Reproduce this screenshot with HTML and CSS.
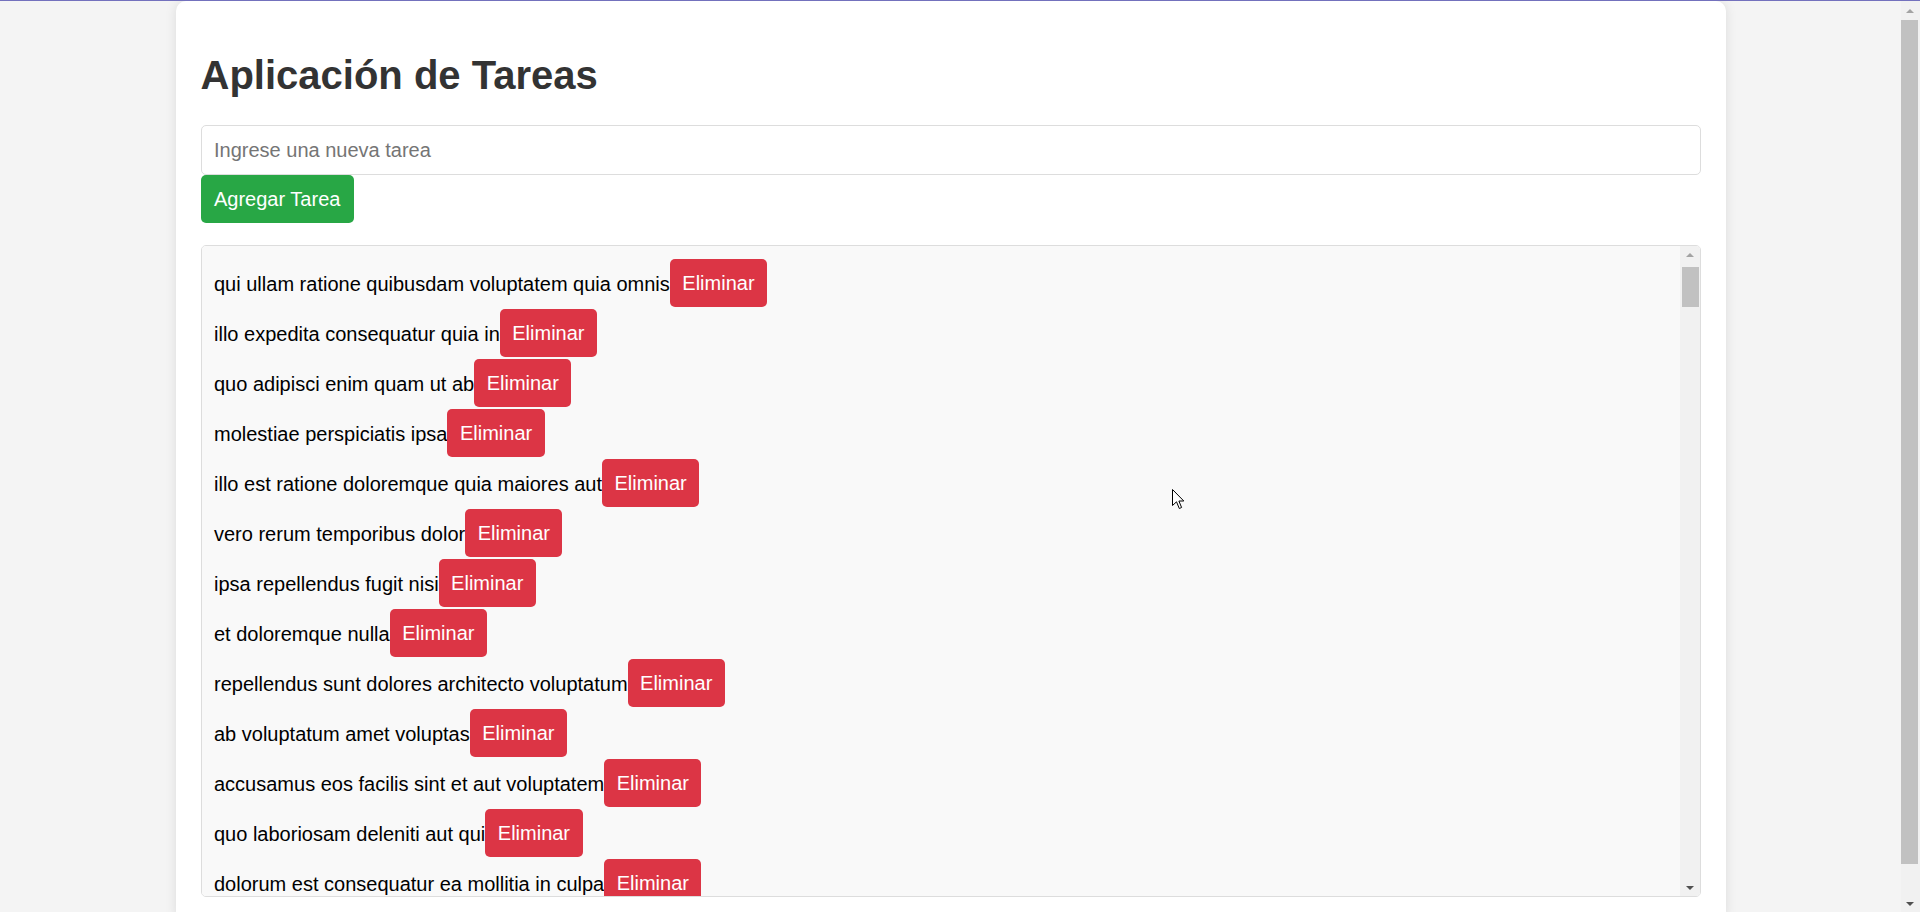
FILE: index.html
```html
<!DOCTYPE html>
<html lang="es">
<head>
<meta charset="utf-8">
<title>Aplicación de Tareas</title>
<link rel="stylesheet" href="styles.css">
</head>
<body>
<div class="container">
  <h1>Aplicación de Tareas</h1>
  <input class="task-input" type="text" placeholder="Ingrese una nueva tarea">
  <button class="btn-add">Agregar Tarea</button>
  <div class="list-wrap">
  <ul class="task-list">
    <li><span>qui ullam ratione quibusdam voluptatem quia omnis</span><button class="btn-del">Eliminar</button></li>
    <li><span>illo expedita consequatur quia in</span><button class="btn-del">Eliminar</button></li>
    <li><span>quo adipisci enim quam ut ab</span><button class="btn-del">Eliminar</button></li>
    <li><span>molestiae perspiciatis ipsa</span><button class="btn-del">Eliminar</button></li>
    <li><span>illo est ratione doloremque quia maiores aut</span><button class="btn-del">Eliminar</button></li>
    <li><span>vero rerum temporibus dolor</span><button class="btn-del">Eliminar</button></li>
    <li><span>ipsa repellendus fugit nisi</span><button class="btn-del">Eliminar</button></li>
    <li><span>et doloremque nulla</span><button class="btn-del">Eliminar</button></li>
    <li><span>repellendus sunt dolores architecto voluptatum</span><button class="btn-del">Eliminar</button></li>
    <li><span>ab voluptatum amet voluptas</span><button class="btn-del">Eliminar</button></li>
    <li><span>accusamus eos facilis sint et aut voluptatem</span><button class="btn-del">Eliminar</button></li>
    <li><span>quo laboriosam deleniti aut qui</span><button class="btn-del">Eliminar</button></li>
    <li><span>dolorum est consequatur ea mollitia in culpa</span><button class="btn-del">Eliminar</button></li>
    <li><span>molestiae ipsa aut voluptatibus pariatur dolor nihil</span><button class="btn-del">Eliminar</button></li>
    <li><span>ullam nobis libero sapiente ad optio sint</span><button class="btn-del">Eliminar</button></li>
    <li><span>suscipit repellat esse quibusdam voluptatem incidunt</span><button class="btn-del">Eliminar</button></li>
    <li><span>distinctio vitae autem nihil ut molestias quo</span><button class="btn-del">Eliminar</button></li>
    <li><span>et itaque necessitatibus maxime molestiae qui quas velit</span><button class="btn-del">Eliminar</button></li>
    <li><span>adipisci non ad dicta qui amet quaerat doloribus ea</span><button class="btn-del">Eliminar</button></li>
    <li><span>voluptas quo tenetur perspiciatis explicabo natus</span><button class="btn-del">Eliminar</button></li>
    <li><span>aliquam aut quasi</span><button class="btn-del">Eliminar</button></li>
    <li><span>veritatis pariatur delectus</span><button class="btn-del">Eliminar</button></li>
    <li><span>nesciunt totam sit blanditiis sit</span><button class="btn-del">Eliminar</button></li>
    <li><span>laborum aut in quam</span><button class="btn-del">Eliminar</button></li>
    <li><span>nemo perspiciatis repellat ut dolor libero commodi blanditiis omnis</span><button class="btn-del">Eliminar</button></li>
    <li><span>repudiandae totam in est sint facere fuga</span><button class="btn-del">Eliminar</button></li>
    <li><span>earum doloribus ea doloremque quis</span><button class="btn-del">Eliminar</button></li>
    <li><span>sint sit aut vero</span><button class="btn-del">Eliminar</button></li>
    <li><span>porro aut necessitatibus eaque distinctio</span><button class="btn-del">Eliminar</button></li>
    <li><span>repellendus veritatis molestias dicta incidunt</span><button class="btn-del">Eliminar</button></li>
    <li><span>excepturi deleniti adipisci voluptatem et neque optio illum ad</span><button class="btn-del">Eliminar</button></li>
    <li><span>sunt cum tempora</span><button class="btn-del">Eliminar</button></li>
    <li><span>totam quia non</span><button class="btn-del">Eliminar</button></li>
    <li><span>doloremque quibusdam asperiores libero corrupti illum qui omnis</span><button class="btn-del">Eliminar</button></li>
    <li><span>totam atque quo nesciunt</span><button class="btn-del">Eliminar</button></li>
    <li><span>aliquid amet impedit consequatur aspernatur placeat eaque fugiat suscipit</span><button class="btn-del">Eliminar</button></li>
    <li><span>rerum perferendis error quia ut eveniet</span><button class="btn-del">Eliminar</button></li>
    <li><span>tempore ut sint quis recusandae</span><button class="btn-del">Eliminar</button></li>
    <li><span>cum debitis quis accusamus doloremque ipsa natus sapiente omnis</span><button class="btn-del">Eliminar</button></li>
    <li><span>velit soluta adipisci molestias reiciendis harum</span><button class="btn-del">Eliminar</button></li>
    <li><span>vel voluptatem repellat nihil placeat corporis</span><button class="btn-del">Eliminar</button></li>
    <li><span>nam qui rerum fugiat accusamus</span><button class="btn-del">Eliminar</button></li>
    <li><span>sit reprehenderit omnis quia</span><button class="btn-del">Eliminar</button></li>
    <li><span>ut necessitatibus aut maiores debitis officia blanditiis velit et</span><button class="btn-del">Eliminar</button></li>
    <li><span>cupiditate necessitatibus ullam aut quis dolor voluptate</span><button class="btn-del">Eliminar</button></li>
    <li><span>distinctio exercitationem ab doloribus</span><button class="btn-del">Eliminar</button></li>
    <li><span>nesciunt dolorum quis recusandae ad pariatur ratione</span><button class="btn-del">Eliminar</button></li>
    <li><span>qui labore est occaecati recusandae aliquid quam</span><button class="btn-del">Eliminar</button></li>
    <li><span>quis et est ut voluptate quam dolor</span><button class="btn-del">Eliminar</button></li>
    <li><span>voluptatum omnis minima qui occaecati provident nulla voluptatem ratione</span><button class="btn-del">Eliminar</button></li>
    <li><span>deleniti ea temporibus enim</span><button class="btn-del">Eliminar</button></li>
    <li><span>pariatur et magnam ea doloribus similique voluptatem rerum quia</span><button class="btn-del">Eliminar</button></li>
    <li><span>est dicta totam qui explicabo doloribus qui dignissimos</span><button class="btn-del">Eliminar</button></li>
    <li><span>perspiciatis velit id laborum placeat iusto et aliquam odio</span><button class="btn-del">Eliminar</button></li>
    <li><span>et sequi qui architecto ut adipisci</span><button class="btn-del">Eliminar</button></li>
    <li><span>odit optio omnis qui sunt</span><button class="btn-del">Eliminar</button></li>
    <li><span>et placeat et tempore aspernatur sint numquam</span><button class="btn-del">Eliminar</button></li>
    <li><span>doloremque aut dolores quidem fuga qui nulla</span><button class="btn-del">Eliminar</button></li>
    <li><span>voluptas consequatur qui ut quia magnam nemo esse</span><button class="btn-del">Eliminar</button></li>
    <li><span>fugiat pariatur ratione ut asperiores necessitatibus magni</span><button class="btn-del">Eliminar</button></li>
    <li><span>rerum eum molestias autem voluptatum sit optio</span><button class="btn-del">Eliminar</button></li>
    <li><span>quia voluptatibus voluptatem quos similique maiores repellat</span><button class="btn-del">Eliminar</button></li>
    <li><span>aut id perspiciatis voluptatem iusto</span><button class="btn-del">Eliminar</button></li>
    <li><span>doloribus sint dolorum ab adipisci itaque dignissimos aliquam suscipit</span><button class="btn-del">Eliminar</button></li>
    <li><span>ut sequi accusantium et mollitia delectus sunt</span><button class="btn-del">Eliminar</button></li>
    <li><span>aut velit saepe ullam</span><button class="btn-del">Eliminar</button></li>
    <li><span>praesentium facilis facere quis harum voluptatibus voluptatem eum</span><button class="btn-del">Eliminar</button></li>
    <li><span>sint amet quia totam corporis qui exercitationem commodi</span><button class="btn-del">Eliminar</button></li>
    <li><span>expedita tempore nobis eveniet laborum maiores</span><button class="btn-del">Eliminar</button></li>
    <li><span>occaecati adipisci est possimus totam</span><button class="btn-del">Eliminar</button></li>
    <li><span>sequi dolorem sed</span><button class="btn-del">Eliminar</button></li>
    <li><span>maiores aut nesciunt delectus exercitationem vel assumenda eligendi at</span><button class="btn-del">Eliminar</button></li>
    <li><span>reiciendis est magnam amet nemo iste recusandae impedit quaerat</span><button class="btn-del">Eliminar</button></li>
    <li><span>eum ipsa maxime ut</span><button class="btn-del">Eliminar</button></li>
    <li><span>tempore molestias dolores rerum sequi voluptates ipsum consequatur</span><button class="btn-del">Eliminar</button></li>
    <li><span>suscipit qui totam</span><button class="btn-del">Eliminar</button></li>
    <li><span>voluptates eum voluptas et dicta</span><button class="btn-del">Eliminar</button></li>
    <li><span>quidem at rerum quis ex aut sit quam</span><button class="btn-del">Eliminar</button></li>
    <li><span>sunt veritatis ut voluptate</span><button class="btn-del">Eliminar</button></li>
    <li><span>et quia ad iste a</span><button class="btn-del">Eliminar</button></li>
    <li><span>incidunt ut saepe autem</span><button class="btn-del">Eliminar</button></li>
    <li><span>laudantium quae eligendi consequatur quia et vero autem</span><button class="btn-del">Eliminar</button></li>
    <li><span>vitae aut excepturi laboriosam sint aliquam et et accusantium</span><button class="btn-del">Eliminar</button></li>
    <li><span>sequi ut omnis et</span><button class="btn-del">Eliminar</button></li>
    <li><span>molestiae nisi accusantium tenetur dolorem et</span><button class="btn-del">Eliminar</button></li>
    <li><span>nulla quis consequatur saepe qui id expedita</span><button class="btn-del">Eliminar</button></li>
    <li><span>in omnis laboriosam</span><button class="btn-del">Eliminar</button></li>
    <li><span>odio iure consequatur molestiae quibusdam necessitatibus quia sint</span><button class="btn-del">Eliminar</button></li>
    <li><span>facilis modi saepe mollitia</span><button class="btn-del">Eliminar</button></li>
    <li><span>vel nihil et molestiae iusto assumenda nemo quo ut</span><button class="btn-del">Eliminar</button></li>
    <li><span>nobis suscipit ducimus enim asperiores voluptas</span><button class="btn-del">Eliminar</button></li>
    <li><span>dolorum laboriosam eos qui iure aliquam</span><button class="btn-del">Eliminar</button></li>
    <li><span>debitis accusantium ut quo facilis nihil quis sapiente necessitatibus</span><button class="btn-del">Eliminar</button></li>
    <li><span>neque voluptates ratione</span><button class="btn-del">Eliminar</button></li>
    <li><span>excepturi a et neque qui expedita vel voluptate</span><button class="btn-del">Eliminar</button></li>
    <li><span>explicabo enim cumque porro aperiam occaecati minima</span><button class="btn-del">Eliminar</button></li>
    <li><span>sed ab consequatur</span><button class="btn-del">Eliminar</button></li>
    <li><span>non sunt delectus illo nulla tenetur enim omnis</span><button class="btn-del">Eliminar</button></li>
    <li><span>excepturi non laudantium quo</span><button class="btn-del">Eliminar</button></li>
    <li><span>totam quia dolorem et illum repellat voluptas optio</span><button class="btn-del">Eliminar</button></li>
    <li><span>ad illo quis voluptatem temporibus</span><button class="btn-del">Eliminar</button></li>
    <li><span>praesentium facilis omnis laudantium fugit ad iusto nihil nesciunt</span><button class="btn-del">Eliminar</button></li>
    <li><span>a eos eaque nihil et exercitationem incidunt delectus</span><button class="btn-del">Eliminar</button></li>
    <li><span>autem temporibus harum quisquam in culpa</span><button class="btn-del">Eliminar</button></li>
    <li><span>aut aut ea corporis</span><button class="btn-del">Eliminar</button></li>
    <li><span>magni accusantium labore et id quis provident</span><button class="btn-del">Eliminar</button></li>
    <li><span>consectetur impedit quisquam qui deserunt non rerum consequuntur eius</span><button class="btn-del">Eliminar</button></li>
    <li><span>quia atque aliquam sunt impedit voluptatum rerum assumenda nisi</span><button class="btn-del">Eliminar</button></li>
    <li><span>cupiditate quos possimus corporis quisquam exercitationem</span><button class="btn-del">Eliminar</button></li>
    <li><span>sed et ea eum</span><button class="btn-del">Eliminar</button></li>
    <li><span>ipsa dolores vel facilis ut</span><button class="btn-del">Eliminar</button></li>
    <li><span>sequi quae est et qui qui eveniet asperiores</span><button class="btn-del">Eliminar</button></li>
    <li><span>quia modi consequatur vero fugiat</span><button class="btn-del">Eliminar</button></li>
    <li><span>corporis ducimus ea perspiciatis iste</span><button class="btn-del">Eliminar</button></li>
    <li><span>dolorem laboriosam vel voluptas et aliquam quasi</span><button class="btn-del">Eliminar</button></li>
    <li><span>inventore aut nihil minima laudantium hic qui omnis</span><button class="btn-del">Eliminar</button></li>
    <li><span>provident aut nobis culpa</span><button class="btn-del">Eliminar</button></li>
    <li><span>esse et quis iste est earum aut impedit</span><button class="btn-del">Eliminar</button></li>
    <li><span>qui consectetur id</span><button class="btn-del">Eliminar</button></li>
    <li><span>aut quas cumque rerum est</span><button class="btn-del">Eliminar</button></li>
    <li><span>voluptatem sit eos facilis autem adipisci</span><button class="btn-del">Eliminar</button></li>
    <li><span>quo praesentium dignissimos placeat rerum</span><button class="btn-del">Eliminar</button></li>
    <li><span>doloribus quasi exercitationem similique et</span><button class="btn-del">Eliminar</button></li>
    <li><span>explicabo consequatur debitis nostrum</span><button class="btn-del">Eliminar</button></li>
    <li><span>ipsum laudantium voluptates accusamus eius sit</span><button class="btn-del">Eliminar</button></li>
    <li><span>minima sunt minus cum dolore odit</span><button class="btn-del">Eliminar</button></li>
    <li><span>laborum animi et quam aperiam similique</span><button class="btn-del">Eliminar</button></li>
    <li><span>ex dolores error quod</span><button class="btn-del">Eliminar</button></li>
    <li><span>in quas dignissimos iusto</span><button class="btn-del">Eliminar</button></li>
    <li><span>quo consequatur quia quae sunt modi vitae</span><button class="btn-del">Eliminar</button></li>
    <li><span>ad quisquam esse</span><button class="btn-del">Eliminar</button></li>
    <li><span>sit perferendis ut fugit rem</span><button class="btn-del">Eliminar</button></li>
    <li><span>ut fugit voluptatem voluptas quo</span><button class="btn-del">Eliminar</button></li>
    <li><span>voluptate dolores a quia</span><button class="btn-del">Eliminar</button></li>
    <li><span>omnis aut non</span><button class="btn-del">Eliminar</button></li>
    <li><span>ipsam qui reprehenderit</span><button class="btn-del">Eliminar</button></li>
    <li><span>vel inventore consequuntur dolorem quam</span><button class="btn-del">Eliminar</button></li>
    <li><span>nihil voluptas doloremque dolorum ex</span><button class="btn-del">Eliminar</button></li>
    <li><span>quae quisquam eaque ullam et</span><button class="btn-del">Eliminar</button></li>
    <li><span>enim hic voluptatem ut ea</span><button class="btn-del">Eliminar</button></li>
    <li><span>qui rem labore ex</span><button class="btn-del">Eliminar</button></li>
    <li><span>sapiente voluptatem iure et</span><button class="btn-del">Eliminar</button></li>
    <li><span>quo culpa qui rerum</span><button class="btn-del">Eliminar</button></li>
    <li><span>et voluptatem eius aut sed sequi</span><button class="btn-del">Eliminar</button></li>
    <li><span>mollitia expedita ut quas iste</span><button class="btn-del">Eliminar</button></li>
    <li><span>numquam reiciendis laboriosam dolor</span><button class="btn-del">Eliminar</button></li>
    <li><span>voluptas eum rem rerum ut</span><button class="btn-del">Eliminar</button></li>
    <li><span>aspernatur labore autem et quia</span><button class="btn-del">Eliminar</button></li>
    <li><span>porro et tempora ipsam cumque</span><button class="btn-del">Eliminar</button></li>
    <li><span>molestias quasi eos rem</span><button class="btn-del">Eliminar</button></li>
    <li><span>fugit ex sint esse et perspiciatis</span><button class="btn-del">Eliminar</button></li>
    <li><span>eius omnis aut rerum</span><button class="btn-del">Eliminar</button></li>
    <li><span>natus ut nobis dolores</span><button class="btn-del">Eliminar</button></li>
    <li><span>ea sunt hic in veniam</span><button class="btn-del">Eliminar</button></li>
    <li><span>placeat quia saepe ab assumenda</span><button class="btn-del">Eliminar</button></li>
    <li><span>dolorem quia aliquid odio</span><button class="btn-del">Eliminar</button></li>
    <li><span>et est voluptas perferendis</span><button class="btn-del">Eliminar</button></li>
    <li><span>magnam ut reiciendis dolore</span><button class="btn-del">Eliminar</button></li>
    <li><span>libero sunt aut quod</span><button class="btn-del">Eliminar</button></li>
    <li><span>dicta ut harum quae</span><button class="btn-del">Eliminar</button></li>
    <li><span>sequi quia laudantium voluptas</span><button class="btn-del">Eliminar</button></li>
    <li><span>nam ut est fugiat</span><button class="btn-del">Eliminar</button></li>
    <li><span>omnis iure vitae quos</span><button class="btn-del">Eliminar</button></li>
    <li><span>rem est non quibusdam</span><button class="btn-del">Eliminar</button></li>
    <li><span>velit autem aut qui</span><button class="btn-del">Eliminar</button></li>
    <li><span>similique corrupti ut ea</span><button class="btn-del">Eliminar</button></li>
    <li><span>cum quasi aliquam odit</span><button class="btn-del">Eliminar</button></li>
    <li><span>beatae voluptas et aut</span><button class="btn-del">Eliminar</button></li>
    <li><span>id saepe earum qui</span><button class="btn-del">Eliminar</button></li>
    <li><span>iste dolores minima sit</span><button class="btn-del">Eliminar</button></li>
    <li><span>voluptatem qui sed ipsam</span><button class="btn-del">Eliminar</button></li>
    <li><span>occaecati iure est dolor</span><button class="btn-del">Eliminar</button></li>
    <li><span>quaerat in ipsum quia</span><button class="btn-del">Eliminar</button></li>
    <li><span>aut animi labore sit</span><button class="btn-del">Eliminar</button></li>
    <li><span>ratione est nesciunt hic</span><button class="btn-del">Eliminar</button></li>
    <li><span>eos nam ut harum</span><button class="btn-del">Eliminar</button></li>
    <li><span>repellat fugit vitae odio</span><button class="btn-del">Eliminar</button></li>
    <li><span>ullam officiis nisi sint</span><button class="btn-del">Eliminar</button></li>
    <li><span>corrupti tenetur enim cum</span><button class="btn-del">Eliminar</button></li>
    <li><span>fuga non iusto ad</span><button class="btn-del">Eliminar</button></li>
    <li><span>asperiores quis aut eius</span><button class="btn-del">Eliminar</button></li>
    <li><span>harum et nisi dolor</span><button class="btn-del">Eliminar</button></li>
    <li><span>qui sint odio nobis</span><button class="btn-del">Eliminar</button></li>
    <li><span>modi ut architecto est</span><button class="btn-del">Eliminar</button></li>
    <li><span>cumque non esse ipsa</span><button class="btn-del">Eliminar</button></li>
    <li><span>nostrum quas odit et</span><button class="btn-del">Eliminar</button></li>
    <li><span>tenetur ut velit rerum</span><button class="btn-del">Eliminar</button></li>
    <li><span>dolor est omnis quo</span><button class="btn-del">Eliminar</button></li>
    <li><span>eligendi sit ab minus</span><button class="btn-del">Eliminar</button></li>
    <li><span>vero nam dolorem aut</span><button class="btn-del">Eliminar</button></li>
    <li><span>in eaque aut sed</span><button class="btn-del">Eliminar</button></li>
    <li><span>perferendis qui quia cum</span><button class="btn-del">Eliminar</button></li>
    <li><span>accusamus et quod ut</span><button class="btn-del">Eliminar</button></li>
    <li><span>itaque sunt rem et</span><button class="btn-del">Eliminar</button></li>
    <li><span>nisi voluptas non esse</span><button class="btn-del">Eliminar</button></li>
    <li><span>sed quia quae ut</span><button class="btn-del">Eliminar</button></li>
    <li><span>ut nesciunt autem ut</span><button class="btn-del">Eliminar</button></li>
    <li><span>ipsam aut aut ut</span><button class="btn-del">Eliminar</button></li>
  </ul>
  <div class="list-scrollbar" aria-hidden="true">
    <div class="sb-btn sb-up"></div>
    <div class="sb-thumb list-thumb"></div>
    <div class="sb-track"></div>
    <div class="sb-btn sb-down"></div>
  </div>
  </div>
</div>
<div class="page-scrollbar" aria-hidden="true">
  <div class="sb-btn sb-up page-up"></div>
  <div class="sb-thumb page-thumb"></div>
  <div class="sb-track"></div>
  <div class="sb-btn sb-down"></div>
</div>
<svg class="mouse-cursor" width="13" height="21" viewBox="0 0 13 21" aria-hidden="true">
  <path d="M0.5 0.5 L0.5 16.5 L4.5 12.8 L7.3 19.5 L9.6 18.5 L6.9 12 L11.8 12 Z" fill="#ffffff" stroke="#000000" stroke-width="1" stroke-linejoin="miter"/>
</svg>
</body>
</html>
```

FILE: styles.css
```css
html {
  border-top: 1px solid #7371bd;
  scrollbar-width: none;
}

body {
  margin: 0;
  padding-right: 19px;
  background: #f4f4f4;
  font-family: "Liberation Sans", Arial, sans-serif;
}

.container {
  width: 1500px;
  margin: 0 auto 25px;
  padding: 25px;
  background: #ffffff;
  border-radius: 10px;
  box-shadow: 0 0 12px rgba(0, 0, 0, 0.1);
}

h1 {
  font-size: 40px;
  font-weight: bold;
  color: #333333;
  margin: 27px 0;
  line-height: normal;
}

.task-input {
  display: block;
  width: 100%;
  box-sizing: border-box;
  padding: 12.5px;
  font-size: 20px;
  font-family: inherit;
  border: 1px solid #dddddd;
  border-radius: 5px;
  color: #333;
}

.task-input::placeholder {
  color: #757575;
}

.btn-add {
  display: inline-block;
  padding: 12.5px 13.5px;
  font-size: 20px;
  font-family: inherit;
  background: #28a745;
  color: #ffffff;
  border: none;
  border-radius: 5px;
  cursor: pointer;
  vertical-align: top;
}

.list-wrap {
  position: relative;
  margin-top: 22px;
}

.task-list {
  list-style: none;
  margin: 0;
  padding: 13px 12.5px 12.5px;
  box-sizing: border-box;
  height: 652px;
  overflow-y: auto;
  scrollbar-width: none;
  border: 1px solid #dddddd;
  border-radius: 5px;
  background: #f9f9f9;
}

.task-list li {
  display: flex;
  align-items: center;
  margin-bottom: 2px;
  font-size: 20px;
  color: #000000;
}

.task-list li span {
  padding-top: 2px;
}

.btn-del {
  padding: 12.5px;
  font-size: 20px;
  font-family: inherit;
  background: #dc3545;
  color: #ffffff;
  border: none;
  border-radius: 5px;
  cursor: pointer;
}

/* scrollbars (drawn) */
.list-scrollbar,
.page-scrollbar {
  display: flex;
  flex-direction: column;
  background: #f1f1f1;
}

.list-scrollbar {
  position: absolute;
  top: 1px;
  right: 1px;
  bottom: 1px;
  width: 20px;
  border-top-right-radius: 4px;
  border-bottom-right-radius: 4px;
}

.page-scrollbar {
  position: fixed;
  top: 1px;
  right: 0;
  bottom: 0;
  width: 19px;
}

.sb-btn {
  flex: none;
  height: 17px;
  display: flex;
  align-items: center;
  justify-content: center;
}

.sb-up::before {
  content: "";
  border-left: 4px solid transparent;
  border-right: 4px solid transparent;
  border-bottom: 4px solid #a3a3a3;
}

.sb-down::before {
  content: "";
  border-left: 4px solid transparent;
  border-right: 4px solid transparent;
  border-top: 4px solid #505050;
}

.page-up {
  height: 19px;
  padding-right: 2px;
}

.page-scrollbar .sb-down {
  padding-right: 2px;
}

.sb-thumb {
  flex: none;
  background: #c1c1c1;
}

.list-thumb {
  height: 40px;
  margin: 4px 1px 0 2px;
}

.page-thumb {
  height: 844px;
  margin-right: 2px;
}

.sb-track {
  flex: 1;
}

.mouse-cursor {
  position: fixed;
  left: 1172px;
  top: 489px;
}
```
